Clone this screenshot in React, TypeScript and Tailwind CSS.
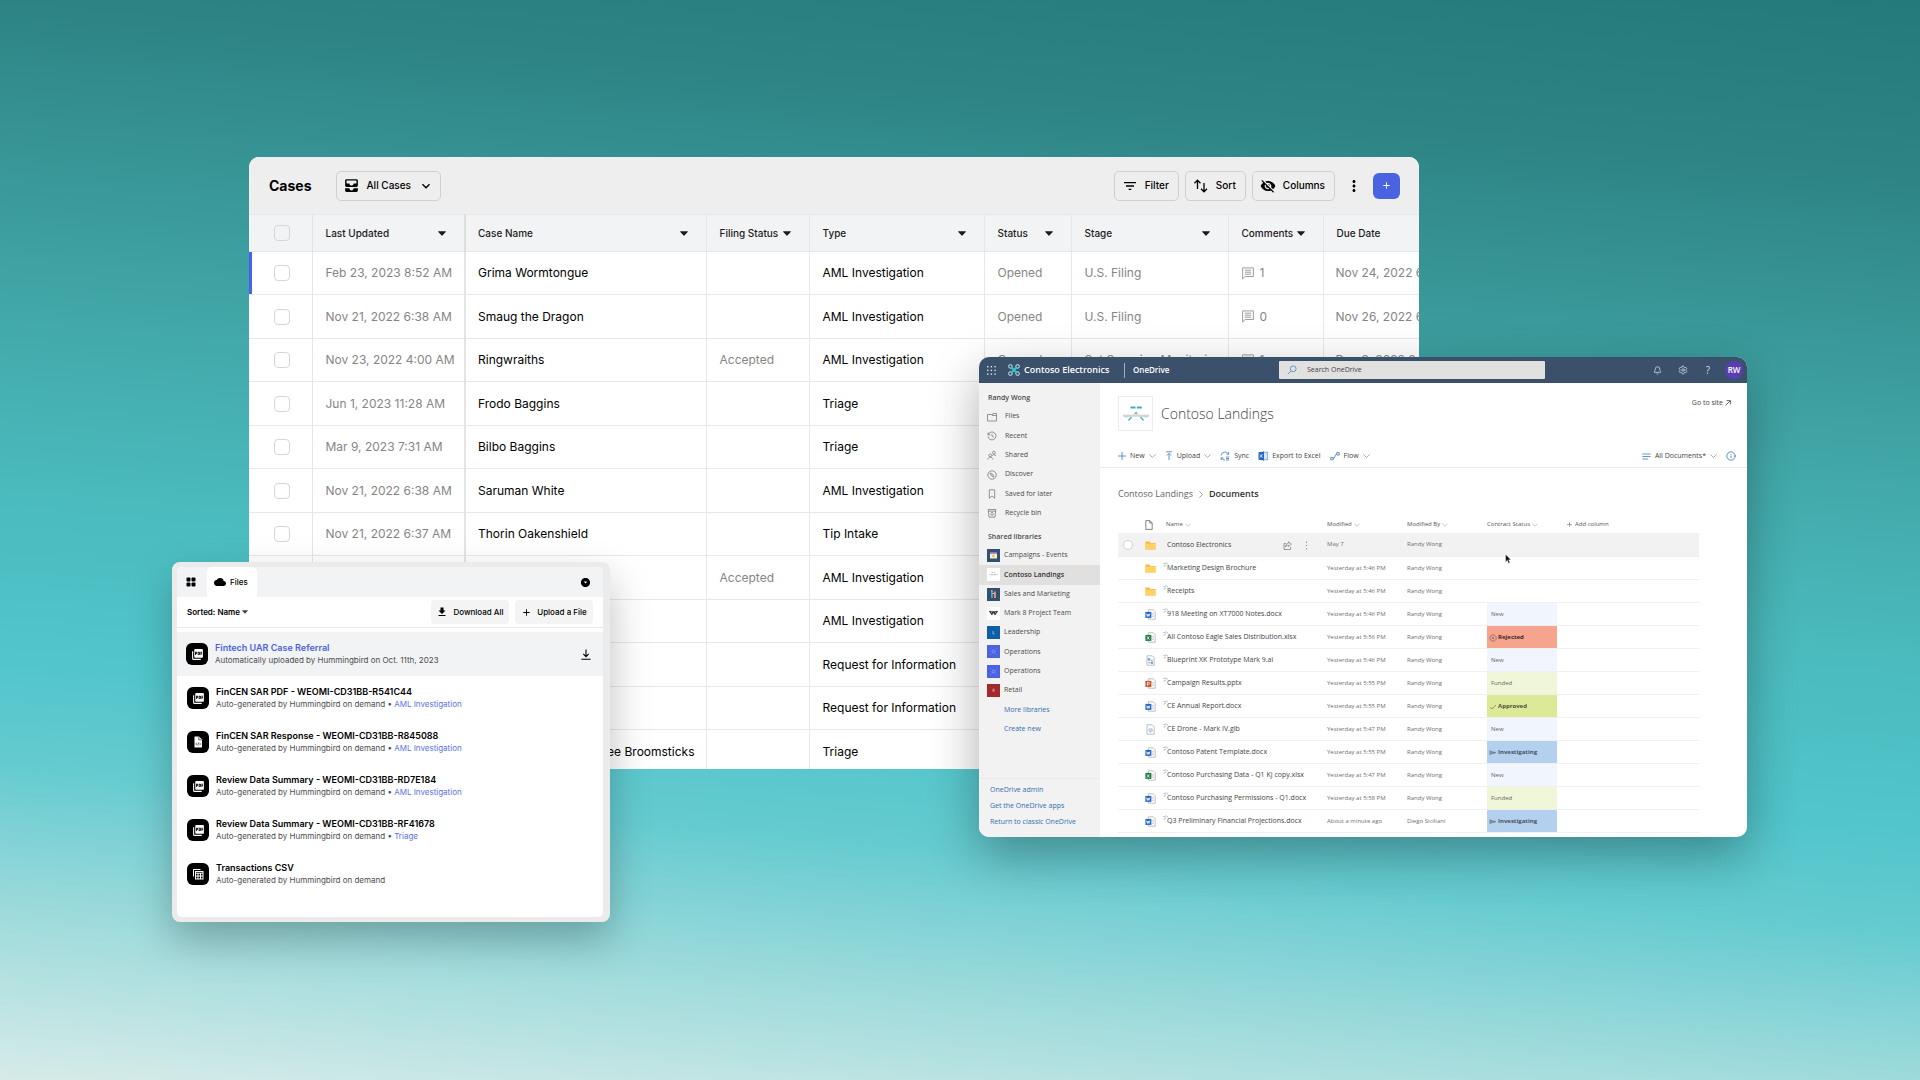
import type { ReactNode } from 'react'
import {
  MdAdd,
  MdAllInbox,
  MdArrowDropDownCircle,
  MdCloud,
  MdDownload,
  MdFilterList,
  MdKeyboardArrowDown,
  MdMoreVert,
  MdPictureAsPdf,
  MdVisibilityOff,
} from 'react-icons/md'
import { Bell, Info, Settings } from 'lucide-react'

interface CaseRow {
  updated: string
  name: string
  filing?: string
  type: string
  status?: string
  stage?: string
  comments?: number
  due?: string
}

const CASES: CaseRow[] = [
  { updated: 'Feb 23, 2023 8:52 AM', name: 'Grima Wormtongue', type: 'AML Investigation', status: 'Opened', stage: 'U.S. Filing', comments: 1, due: 'Nov 24, 2022 6' },
  { updated: 'Nov 21, 2022 6:38 AM', name: 'Smaug the Dragon', type: 'AML Investigation', status: 'Opened', stage: 'U.S. Filing', comments: 0, due: 'Nov 26, 2022 6' },
  { updated: 'Nov 23, 2022 4:00 AM', name: 'Ringwraiths', filing: 'Accepted', type: 'AML Investigation', status: 'Opened', stage: 'Set Sourcing Monitoring', comments: 1, due: 'Dec 3, 2022 3' },
  { updated: 'Jun 1, 2023 11:28 AM', name: 'Frodo Baggins', type: 'Triage' },
  { updated: 'Mar 9, 2023 7:31 AM', name: 'Bilbo Baggins', type: 'Triage' },
  { updated: 'Nov 21, 2022 6:38 AM', name: 'Saruman White', type: 'AML Investigation' },
  { updated: 'Nov 21, 2022 6:37 AM', name: 'Thorin Oakenshield', type: 'Tip Intake' },
  { updated: '', name: '', filing: 'Accepted', type: 'AML Investigation' },
  { updated: '', name: '', type: 'AML Investigation' },
  { updated: '', name: '', type: 'Request for Information' },
  { updated: '', name: '', type: 'Request for Information' },
  { updated: '', name: 'Madame Rosmerta Three Broomsticks', type: 'Triage' },
]

const CASE_COLUMNS = [
  { label: 'Last Updated', width: 'w-[153px]' },
  { label: 'Case Name', width: 'w-[241px]' },
  { label: 'Filing Status', width: 'w-[103px]' },
  { label: 'Type', width: 'w-[175px]' },
  { label: 'Status', width: 'w-[87px]' },
  { label: 'Stage', width: 'w-[157px]' },
  { label: 'Comments', width: 'w-[95px]' },
]

function Caret({ className }: { className?: string }) {
  return (
    <svg viewBox="0 0 8 5" className={className} fill="currentColor" aria-hidden="true">
      <path d="M.6.3h6.8c.4 0 .6.5.3.8L4.4 4.6a.6.6 0 0 1-.8 0L.3 1.1C0 .8.2.3.6.3z" />
    </svg>
  )
}

function SortIcon() {
  return (
    <svg viewBox="0 0 16 16" className="size-4" fill="none" stroke="currentColor" strokeWidth="1.3" aria-hidden="true">
      <path d="M4.5 11V2.2M1.5 5.2l3-3 3 3M11 5v8.800M8 10.800l3 3 3-3" />
    </svg>
  )
}

function CommentIcon() {
  return (
    <svg viewBox="0 0 12 13" className="h-[13px] w-3" fill="none" stroke="currentColor" strokeWidth=".8" aria-hidden="true">
      <path d="M.6.9h10.800v8.600H3.200L.6 12zM2.800 3.200h6.400M2.800 5.200h6.400M2.800 7.200h6.400" />
    </svg>
  )
}

function ToolButton({ icon, children }: { icon: ReactNode; children: ReactNode }) {
  return (
    <button className="flex h-[30px] items-center gap-[7px] rounded-[5px] border border-[#d0d0d0] pr-[9px] pl-[7px] text-[10px] font-medium">
      {icon}
      {children}
    </button>
  )
}

function RowCheckbox({ label }: { label: string }) {
  return (
    <input
      type="checkbox"
      aria-label={label}
      className="ml-[25px] block size-4 appearance-none rounded-[4px] border border-[#d6d6d6] checked:bg-[#4a63e0]"
    />
  )
}

function CasesWindow() {
  return (
    <section className="absolute top-[157px] right-[501px] left-[249px] h-[612px] overflow-hidden rounded-[10px] bg-white font-['Inter',sans-serif] text-black">
      <header className="flex h-[57px] items-center bg-[#eeeeee] pr-[19px] pl-5">
        <h1 className="text-[14px] font-bold">Cases</h1>
        <button className="ml-6 flex h-[30px] items-center gap-[7px] rounded-[5px] border border-[#d0d0d0] px-[6px] text-[10px] font-medium">
          <MdAllInbox className="size-[17px]" />
          All Cases
          <MdKeyboardArrowDown className="size-4" />
        </button>
        <div className="ml-auto flex items-center gap-[6px]">
          <ToolButton icon={<MdFilterList className="size-4" />}>Filter</ToolButton>
          <ToolButton icon={<SortIcon />}>Sort</ToolButton>
          <ToolButton icon={<MdVisibilityOff className="size-4" />}>Columns</ToolButton>
          <button aria-label="More" className="mx-1">
            <MdMoreVert className="size-[18px]" />
          </button>
          <button aria-label="New case" className="flex h-[26px] w-[27px] items-center justify-center rounded-[6px] bg-[#4a63e0] text-white">
            <MdAdd className="size-[11px]" />
          </button>
        </div>
      </header>

      <table className="w-full table-fixed border-collapse text-left text-[12px] whitespace-nowrap">
        <thead>
          <tr className="h-[37px] border-y border-[#e6e7e8] bg-[#f2f3f5] text-[10px] text-[#1c1c1c]">
            <th className="w-[63px] border-r border-[#e2e3e4] p-0">
              <RowCheckbox label="Select all cases" />
            </th>
            {CASE_COLUMNS.map((col, i) => (
              <th
                key={col.label}
                className={`${col.width} p-0 font-medium ${i === 0 ? 'border-r-2 border-[#dcdddc]' : 'border-r border-[#e6e7e8]'}`}
              >
                <div className={`flex items-center justify-between pr-[18px] ${i === 1 ? 'pl-3' : 'pl-[13px]'}`}>
                  {col.label}
                  <Caret className="w-2" />
                </div>
              </th>
            ))}
            <th className="p-0 pl-[13px] font-medium">Due Date</th>
          </tr>
        </thead>
        <tbody>
          {CASES.map((row, i) => (
            <tr key={i} className="border-b border-[#e8e8e8] odd:h-[43px] even:h-[44px]">
              <td className={`border-r border-[#e6e6e6] p-0 ${i === 0 ? 'shadow-[inset_3px_0_0_#4a5ff0]' : ''}`}>
                <RowCheckbox label={`Select ${row.name}`} />
              </td>
              <td className="border-r-2 border-[#e4e4e4] p-0 pl-[13px] text-[#858585]">{row.updated}</td>
              <td className="border-r border-[#e8e8e8] p-0 pl-3">{row.name}</td>
              <td className="border-r border-[#e8e8e8] p-0 pl-[13px] text-[#858585]">{row.filing}</td>
              <td className="border-r border-[#e8e8e8] p-0 pl-[13px]">{row.type}</td>
              <td className="border-r border-[#e8e8e8] p-0 pl-[13px] text-[#858585]">{row.status}</td>
              <td className="border-r border-[#e8e8e8] p-0 pl-[13px] text-[#858585]">{row.stage}</td>
              <td className="border-r border-[#e8e8e8] p-0 pl-[13px] text-[#858585]">
                {row.comments !== undefined && (
                  <span className="flex items-center gap-[6px]">
                    <CommentIcon />
                    {row.comments}
                  </span>
                )}
              </td>
              <td className="p-0 pl-3 text-[#858585]">{row.due}</td>
            </tr>
          ))}
        </tbody>
      </table>
    </section>
  )
}

type FileKind = 'pdf' | 'code' | 'csv'

const FILES: { kind: FileKind; title: string; note: string; link?: string }[] = [
  { kind: 'pdf', title: 'FinCEN SAR PDF - WEOMI-CD31BB-R541C44', note: 'Auto-generated by Hummingbird on demand', link: 'AML Investigation' },
  { kind: 'code', title: 'FinCEN SAR Response - WEOMI-CD31BB-R845088', note: 'Auto-generated by Hummingbird on demand', link: 'AML Investigation' },
  { kind: 'pdf', title: 'Review Data Summary - WEOMI-CD31BB-RD7E184', note: 'Auto-generated by Hummingbird on demand', link: 'AML Investigation' },
  { kind: 'pdf', title: 'Review Data Summary - WEOMI-CD31BB-RF41678', note: 'Auto-generated by Hummingbird on demand', link: 'Triage' },
  { kind: 'csv', title: 'Transactions CSV', note: 'Auto-generated by Hummingbird on demand' },
]

function KindBadge({ kind }: { kind: FileKind }) {
  return (
    <span className="flex size-[22px] shrink-0 items-center justify-center rounded-[6px] bg-black text-white">
      {kind === 'pdf' && <MdPictureAsPdf className="size-[13px]" />}
      {kind === 'code' && (
        <svg viewBox="0 0 12 12" className="size-3" aria-hidden="true">
          <path d="M2.5.5H7L10 3.6v7.9H2.5z" fill="#fff" />
          <path d="M6.8.8v3h3M4.9 6.8 3.8 8l1.1 1.2M7.5 6.8 8.6 8 7.5 9.2M6.6 6.6 5.8 9.4" stroke="#000" strokeWidth=".6" fill="none" />
        </svg>
      )}
      {kind === 'csv' && (
        <svg viewBox="0 0 12 12" className="size-3" fill="none" stroke="#fff" strokeWidth="1" aria-hidden="true">
          <path d="M1.5 8.5v-7h7" />
          <rect x="3.5" y="3.5" width="7.5" height="7.5" />
          <path d="M3.5 5.2H11M3.5 8H11M6 5v6M8.5 5v6" />
        </svg>
      )}
    </span>
  )
}

function FilesWindow() {
  return (
    <section className="absolute top-[562px] left-[172px] w-[438px] rounded-[8px] bg-[#ebebec] py-[5px] pr-[7px] pl-[5px] font-['Inter',sans-serif] text-black shadow-[0_18px_40px_rgba(0,0,0,0.25)]">
      <div className="overflow-hidden rounded-[5px] bg-white pb-[21px]">
        <div className="flex h-[30px] items-center bg-[#f2f3f5]">
          <button aria-label="Dashboard" className="flex w-[30px] items-center pl-[9px]">
            <svg viewBox="0 0 10 10" className="size-[10px]" aria-hidden="true">
              <rect x=".5" y=".5" width="4" height="4" rx="1" />
              <rect x="5.5" y=".5" width="4" height="4" rx="1" />
              <rect x=".5" y="5.5" width="4" height="4" rx="1" />
              <rect x="5.5" y="5.5" width="4" height="4" rx="1" />
            </svg>
          </button>
          <button className="flex h-full w-[50px] items-center gap-1 rounded-t-[5px] bg-white pl-[7px] text-[8px] font-medium">
            <MdCloud className="size-3" />
            Files
          </button>
          <button aria-label="Collapse" className="mr-3 ml-auto">
            <MdArrowDropDownCircle className="size-[11px]" />
          </button>
        </div>

        <div className="flex h-[31px] items-center border-b border-[#e6e7e8] px-[10px] text-[8px]">
          <button className="flex items-center gap-[2px] font-semibold">
            Sorted: Name
            <Caret className="w-[6px] text-[#444]" />
          </button>
          <button className="ml-auto flex h-6 w-[78px] items-center justify-center gap-[5px] rounded-[4px] bg-[#f4f4f5] font-medium">
            <MdDownload className="size-3" />
            Download All
          </button>
          <button className="ml-[6px] flex h-6 w-[78px] items-center justify-center gap-[5px] rounded-[4px] bg-[#f4f4f5] font-medium">
            <MdAdd className="size-[11px]" />
            Upload a File
          </button>
        </div>

        <ul className="mt-1">
          <li className="flex h-11 items-center gap-[7px] bg-[#f2f3f5] pr-3 pl-[9px]">
            <KindBadge kind="pdf" />
            <div>
              <a href="#" className="block text-[9px] leading-[13px] font-semibold text-[#4a63e0]">Fintech UAR Case Referral</a>
              <p className="text-[8px] leading-[13px] text-[#4c4c4c]">Automatically uploaded by Hummingbird on Oct. 11th, 2023</p>
            </div>
            <button aria-label="Download Fintech UAR Case Referral" className="ml-auto">
              <svg viewBox="0 0 10 11" className="h-[11px] w-[10px]" fill="none" stroke="#000" strokeWidth="1.1" aria-hidden="true">
                <path d="M5 .5v7M2.3 4.9 5 7.6l2.7-2.7M.4 10.2h9.2" />
              </svg>
            </button>
          </li>
          {FILES.map(file => (
            <li key={file.title} className="flex h-11 items-center gap-[7px] pl-[10px]">
              <KindBadge kind={file.kind} />
              <div>
                <p className="text-[9px] leading-[13px] font-semibold">{file.title}</p>
                <p className="text-[8px] leading-[13px] text-[#4c4c4c]">
                  {file.note}
                  {file.link && (
                    <>
                      {' • '}
                      <a href="#" className="text-[#5b72e6]">{file.link}</a>
                    </>
                  )}
                </p>
              </div>
            </li>
          ))}
        </ul>
      </div>
    </section>
  )
}

const NAV_ITEMS: { label: string; icon: ReactNode }[] = [
  { label: 'Files', icon: <path d="M.5 2.5h4l1 1h4v5.5h-9zM5 3.5l1-2h3.5v2" /> },
  { label: 'Recent', icon: <path d="M1 1.5v2.3h2.3M1.2 3.6A4 4 0 1 1 1 5.4M5 2.8v2.5l1.8 1" /> },
  { label: 'Shared', icon: <path d="M6.8 1.2a1.4 1.4 0 1 0 .1 0zM5.4 5.6c.3-1.2 2.7-1.5 3.6.4M3.3 4a1.4 1.4 0 1 0 .1 0zM.8 9.4c.2-3 4.8-3 5 0" /> },
  { label: 'Discover', icon: <path d="M5 .8a4.2 4.2 0 1 0 .1 0zM3 3l2.8 1.3L7 7 4.3 5.7z" /> },
  { label: 'Saved for later', icon: <path d="M2.3.8h5.4v8.4L5 7 2.3 9.2z" /> },
  { label: 'Recycle bin', icon: <path d="M1.2 1.5h7.6L8 9.2H2zM1.4 3.2h7.2M3.8 5.2 5 4.2l1.2 1M3.8 5.4l.5 1.8h1.6l.4-1.8" /> },
]

const LIBRARIES: { label: string; tile: string; art: ReactNode }[] = [
  {
    label: 'Campaigns - Events',
    tile: 'bg-[#34506f]',
    art: (
      <>
        <path d="M3 3.5h7v6H3z" fill="#f5efe6" />
        <path d="M3 3h7v1.8H3z" fill="#9a6fc8" />
        <circle cx="6.5" cy="7" r="1.4" fill="#f2c14e" />
      </>
    ),
  },
  {
    label: 'Contoso Landings',
    tile: 'bg-white',
    art: (
      <>
        <path d="M4.5 4.5h1.6M6.9 4.5h1.6" stroke="#9bc9d0" strokeWidth=".8" />
        <path d="M2 6.5h9M4.5 8.2l1-1.2M8.5 8.2l-1-1.2" stroke="#c4c8cc" strokeWidth=".8" />
      </>
    ),
  },
  {
    label: 'Sales and Marketing',
    tile: 'bg-[#34506f]',
    art: (
      <>
        <path d="M4 4h1.8v6H4z" fill="#49a9c4" />
        <path d="M7 3.4h2V10H7z" fill="#e58a72" />
        <circle cx="4.9" cy="3" r=".9" fill="#e8b79d" />
        <path d="M5.6 5.5h1.6" stroke="#fff" strokeWidth=".8" />
      </>
    ),
  },
  {
    label: 'Mark 8 Project Team',
    tile: 'bg-white',
    art: <path d="M2 4.8h9M3 4l1.6 3.4M6 4.6 4.8 8M7 4.6 8.2 8M10 4 8.4 7.4M5 6h3" stroke="#333" strokeWidth="1.1" />,
  },
  { label: 'Leadership', tile: 'bg-[#0f5fa6]', art: <path d="M6 5v3h1.5" stroke="#9fc4e8" strokeWidth=".8" /> },
  {
    label: 'Operations',
    tile: 'bg-[#4a63e0]',
    art: <path d="M6.5 5a1.5 1.5 0 1 0 .1 0zM3.5 3.5l.7.7M9.5 3.5l-.7.7M3.5 9.5l.7-.7M9.5 9.5l-.7-.7" stroke="#9fb0ff" strokeWidth=".7" />,
  },
  {
    label: 'Operations',
    tile: 'bg-[#4a63e0]',
    art: <path d="M6.5 5a1.5 1.5 0 1 0 .1 0zM3.5 3.5l.7.7M9.5 3.5l-.7.7M3.5 9.5l.7-.7M9.5 9.5l-.7-.7" stroke="#9fb0ff" strokeWidth=".7" />,
  },
  { label: 'Retail', tile: 'bg-[#a32a2a]', art: <path d="M6 8V5h1.2v1.3H6.2M6.6 6.5 7.4 8" stroke="#e8a5a5" strokeWidth=".7" /> },
]

type DocKind = 'folder' | 'word' | 'excel' | 'ppt' | 'ai' | 'glb'
type Status = 'New' | 'Rejected' | 'Funded' | 'Approved' | 'Investigating'

const DOCS: { kind: DocKind; name: string; modified: string; by: string; status?: Status }[] = [
  { kind: 'folder', name: 'Contoso Electronics', modified: 'May 7', by: 'Randy Wong' },
  { kind: 'folder', name: 'Marketing Design Brochure', modified: 'Yesterday at 5:46 PM', by: 'Randy Wong' },
  { kind: 'folder', name: 'Receipts', modified: 'Yesterday at 5:46 PM', by: 'Randy Wong' },
  { kind: 'word', name: '918 Meeting on XT7000 Notes.docx', modified: 'Yesterday at 5:46 PM', by: 'Randy Wong', status: 'New' },
  { kind: 'excel', name: 'All Contoso Eagle Sales Distribution.xlsx', modified: 'Yesterday at 5:56 PM', by: 'Randy Wong', status: 'Rejected' },
  { kind: 'ai', name: 'Blueprint XK Prototype Mark 9.ai', modified: 'Yesterday at 5:46 PM', by: 'Randy Wong', status: 'New' },
  { kind: 'ppt', name: 'Campaign Results.pptx', modified: 'Yesterday at 5:55 PM', by: 'Randy Wong', status: 'Funded' },
  { kind: 'word', name: 'CE Annual Report.docx', modified: 'Yesterday at 5:55 PM', by: 'Randy Wong', status: 'Approved' },
  { kind: 'glb', name: 'CE Drone - Mark IV.glb', modified: 'Yesterday at 5:47 PM', by: 'Randy Wong', status: 'New' },
  { kind: 'word', name: 'Contoso Patent Template.docx', modified: 'Yesterday at 5:55 PM', by: 'Randy Wong', status: 'Investigating' },
  { kind: 'excel', name: 'Contoso Purchasing Data - Q1 KJ copy.xlsx', modified: 'Yesterday at 5:47 PM', by: 'Randy Wong', status: 'New' },
  { kind: 'word', name: 'Contoso Purchasing Permissions - Q1.docx', modified: 'Yesterday at 5:58 PM', by: 'Randy Wong', status: 'Funded' },
  { kind: 'word', name: 'Q3 Preliminary Financial Projections.docx', modified: 'About a minute ago', by: 'Diego Siciliani', status: 'Investigating' },
]

const STATUS_STYLE: Record<Status, string> = {
  New: 'bg-[#f0f5fe] pl-[4px] text-[#666]',
  Funded: 'bg-[#f0f7d8] pl-[4px] text-[#666]',
  Rejected: 'bg-[#f7a48e] pl-[2px] font-bold text-[#3a2a28]',
  Approved: 'bg-[#dcea98] pl-[2px] font-bold text-[#4c5238]',
  Investigating: 'bg-[#b4d0ef] pl-[2px] font-bold text-[#46525f]',
}

const APP_COLOR = { word: '#2468c0', excel: '#1f7a45', ppt: '#c94f2a' }
const APP_MARK = {
  word: 'M1.6 4.6l.8 2.8.8-2.4.8 2.4.8-2.8',
  excel: 'M2 4.4l2.4 3.2M4.4 4.4 2 7.6',
  ppt: 'M2.4 7.8V4.4h1.3a.9.9 0 0 1 0 1.9H2.4',
}

function DocIcon({ kind }: { kind: DocKind }) {
  if (kind === 'folder') {
    return (
      <svg viewBox="0 0 11 9" className="h-[9px] w-[11px]" aria-hidden="true">
        <path d="M.5.6h3.8l1 1.4h5.2v6.4H.5z" fill="#f6b73c" />
        <path d="M.5 2.6h10v5.8H.5z" fill="#fdd267" />
      </svg>
    )
  }
  if (kind === 'ai' || kind === 'glb') {
    return (
      <svg viewBox="0 0 11 11" className="size-[11px]" fill="none" aria-hidden="true">
        <path d="M2 .8h5.2l2 2v7.4H2z" fill="#fff" stroke="#a5a5a5" strokeWidth=".7" />
        {kind === 'ai' ? (
          <path d="M3.2 3.6h1.6v1.6H3.2zM6 5.2h1.8M3.4 7.8h1.8M6.2 7h1.4v1.4H6.2z" stroke="#3f86d0" strokeWidth=".8" />
        ) : (
          <path d="m5.6 4.4 1.7.9v1.9l-1.7.9-1.7-.9V5.3zM3.9 5.3l1.7.9 1.7-.9M5.6 6.2v1.9" stroke="#7fa3dc" strokeWidth=".6" />
        )}
      </svg>
    )
  }
  return (
    <svg viewBox="0 0 11 11" className="size-[11px]" fill="none" aria-hidden="true">
      <path d="M3.4.8h4.8l2 2v7.4H3.4z" fill="#fff" stroke="#a5a5a5" strokeWidth=".7" />
      <path d="M7 4.4h2M7 6h2M7 7.6h2" stroke="#b5b5b5" strokeWidth=".6" />
      <path d="M.4 2.9h6v6h-6z" fill={APP_COLOR[kind]} />
      <path d={APP_MARK[kind]} stroke="#fff" strokeWidth=".8" />
    </svg>
  )
}

function StatusIcon({ status }: { status: Status }) {
  const shapes: Partial<Record<Status, string>> = {
    Rejected: 'M4 .8a3.2 3.2 0 1 0 .1 0zM2.8 2.8l2.4 2.4M5.2 2.8 2.8 5.2',
    Approved: 'M1 4.2 3 6l4-4',
    Investigating: 'M1 1.4V6M1 2.2l5.8 1.5L1 5.2M1 3.7h4',
  }
  if (!shapes[status]) return null
  return (
    <svg viewBox="0 0 8 8" className="size-[8px] shrink-0" fill="none" stroke="#5a5a5a" strokeWidth=".6" aria-hidden="true">
      <path d={shapes[status]} />
    </svg>
  )
}

function Landing({ className }: { className: string }) {
  return (
    <svg viewBox="0 0 28 18" className={className} fill="none" aria-hidden="true">
      <path d="M8.5 2.5h5M14.8 2.5h5" stroke="#35b3bd" strokeWidth="1.8" />
      <path d="M.8 9.8h26.4v1.8l-3 1.2-4-1H8l-4 1-3-1.200z" fill="#d2d3d6" />
      <path d="M10.5 10.2 12.500 7h3l2 3.200z" fill="#e2e3e5" />
      <circle cx="14" cy="8.2" r=".9" fill="#8c8c8c" />
      <path d="M9.5 12 6.5 15.500M18.500 12l3 3.500" stroke="#35b3bd" strokeWidth="1.2" />
    </svg>
  )
}

// Thin chevron used by the drive menus and column headers
function Chevron({ className }: { className: string }) {
  return (
    <svg viewBox="0 0 7 4" className={className} fill="none" stroke="currentColor" strokeWidth=".7" aria-hidden="true">
      <path d="m.4.4 3.1 3.1L6.600.4" />
    </svg>
  )
}

function ThinPlus({ className }: { className: string }) {
  return (
    <svg viewBox="0 0 8 8" className={className} fill="none" stroke="currentColor" strokeWidth=".8" aria-hidden="true">
      <path d="M4 0v8M0 4h8" />
    </svg>
  )
}

function DriveAction({ icon, label, menu }: { icon: ReactNode; label: string; menu?: boolean }) {
  return (
    <button className="flex items-center gap-1">
      {icon}
      {label}
      {menu && <Chevron className="h-1 w-[7px] text-[#8a8a8a]" />}
    </button>
  )
}

function DriveHeader() {
  return (
    <header className="flex h-[26px] items-center bg-[#3a506b] pr-1 pl-2 text-white">
      <button aria-label="App launcher">
        <svg viewBox="0 0 9 9" className="size-[9px]" fill="#dfe6ee" aria-hidden="true">
          {[0, 3.7, 7.4].map(y => [0, 3.7, 7.4].map(x => <rect key={`${x}-${y}`} x={x} y={y} width="1.4" height="1.4" />))}
        </svg>
      </button>
      <svg viewBox="0 0 12 12" className="ml-3 size-3" fill="none" aria-hidden="true">
        <g stroke="#dce9f2" strokeWidth="1">
          <circle cx="2.4" cy="2.4" r="1.8" />
          <circle cx="9.6" cy="2.4" r="1.8" />
          <circle cx="2.4" cy="9.6" r="1.8" />
          <circle cx="9.6" cy="9.6" r="1.8" />
        </g>
        <path d="m3 3 6 6M9 3 3 9" stroke="#35c4cf" strokeWidth="2" />
      </svg>
      <span className="ml-1 w-[100px] text-[9px] font-semibold">Contoso Electronics</span>
      <span className="h-[15px] w-px bg-[#9fb0c2]" />
      <span className="ml-2 text-[8px] font-semibold">OneDrive</span>
      <label className="absolute top-[4px] right-[202px] left-[300px] flex h-[18px] items-center gap-[10px] rounded-[1px] bg-[#e1e1e0] pl-2">
        <svg viewBox="0 0 10 10" className="size-[10px] shrink-0" fill="none" stroke="#5b8fc7" strokeWidth=".9" aria-hidden="true">
          <circle cx="6.2" cy="3.8" r="2.9" />
          <path d="M4 6 .8 9.2" />
        </svg>
        <input
          type="search"
          aria-label="Search OneDrive"
          placeholder="Search OneDrive"
          className="w-full bg-transparent pt-px text-[7px] outline-none placeholder:text-[#444]"
        />
      </label>
      <div className="ml-auto flex items-center text-[#d5dde6]">
        <button aria-label="Notifications" className="w-[26px]">
          <Bell className="mx-auto size-[9px]" strokeWidth={2} />
        </button>
        <button aria-label="Settings" className="w-[25px]">
          <Settings className="mx-auto size-[10px]" strokeWidth={1.8} />
        </button>
        <button aria-label="Help" className="w-[26px] text-[10px]">?</button>
        <span className="ml-1 flex size-[18px] items-center justify-center rounded-full bg-[#5b3db3] text-[8px] font-semibold text-white">RW</span>
      </div>
    </header>
  )
}

function DriveSidebar() {
  return (
    <aside className="flex w-[121px] shrink-0 flex-col bg-[#f3f2f2] pt-[9px] text-[7px] text-[#4a4a4a]">
      <h2 className="pl-[9px] text-[7px] leading-[12px] font-semibold">Randy Wong</h2>
      <ul className="mt-[3px] grid h-[116px] auto-rows-fr">
        {NAV_ITEMS.map(item => (
          <li key={item.label}>
            <a href="#" className="flex h-full items-center gap-2 pl-2">
              <svg viewBox="0 0 10 10" className="size-[10px]" fill="none" stroke="#6a6a6a" strokeWidth=".7" aria-hidden="true">
                {item.icon}
              </svg>
              {item.label}
            </a>
          </li>
        ))}
      </ul>
      <h2 className="mt-2 pl-[9px] text-[7px] leading-[12px] font-semibold">Shared libraries</h2>
      <ul className="mt-[3px] grid h-[154px] auto-rows-fr">
        {LIBRARIES.map((lib, i) => (
          <li key={i} className={i === 1 ? 'bg-[#e1e0df] font-semibold text-[#333]' : ''}>
            <a href="#" className="flex h-full items-center gap-1 pl-2">
              <svg viewBox="0 0 13 13" className={`size-[13px] ${lib.tile}`} fill="none" aria-hidden="true">
                {lib.art}
              </svg>
              {lib.label}
            </a>
          </li>
        ))}
      </ul>
      <a href="#" className="flex h-5 items-center pl-[25px] text-[#2f6fb0]">More libraries</a>
      <a href="#" className="flex h-[19px] items-center pl-[25px] text-[#2f6fb0]">Create new</a>
      <div className="mt-auto mb-[6px] border-t border-[#eaeaea] pt-1 text-[#2f6fb0]">
        <a href="#" className="flex h-4 items-center pl-[11px]">OneDrive admin</a>
        <a href="#" className="flex h-4 items-center pl-[11px]">Get the OneDrive apps</a>
        <a href="#" className="flex h-4 items-center pl-[11px]">Return to classic OneDrive</a>
      </div>
    </aside>
  )
}

function SharedMark() {
  return (
    <svg viewBox="0 0 5 5" className="size-[5px]" fill="none" stroke="#5b8fd0" strokeWidth=".6" aria-hidden="true">
      <path d="M.4 1.5h1.5M3 .3v1.800M4.700 1.200v1.200M.6 4.400 3 2.900" />
    </svg>
  )
}

function HeadLabel({ children }: { children: ReactNode }) {
  return (
    <button className="flex items-center gap-[2px]">
      {children}
      <Chevron className="h-1 w-[6px] text-[#a0a0a0]" />
    </button>
  )
}

function DocTable() {
  return (
    <table className="w-full table-fixed border-collapse text-left whitespace-nowrap">
      <thead>
        <tr className="h-[17px] text-[6px] text-[#555]">
          <th className="w-[20px] p-0" />
          <th className="w-[28px] p-0 pl-[7px]">
            <svg viewBox="0 0 8 10" className="h-[10px] w-2" fill="none" stroke="#666" strokeWidth=".8" aria-label="File type">
              <path d="M.8.6h4l2.4 2.4v6.400H.8zM4.800.6V3h2.400" />
            </svg>
          </th>
          <th className="w-[161px] p-0 font-normal"><HeadLabel>Name</HeadLabel></th>
          <th className="w-[80px] p-0 font-normal"><HeadLabel>Modified</HeadLabel></th>
          <th className="w-[80px] p-0 font-normal"><HeadLabel>Modified By</HeadLabel></th>
          <th className="w-[70px] p-0 font-normal"><HeadLabel>Contract Status</HeadLabel></th>
          <th className="p-0 pl-[10px] font-normal">
            <button className="flex items-center gap-[3px]">
              <ThinPlus className="size-[5px]" />
              Add column
            </button>
          </th>
        </tr>
      </thead>
      <tbody>
        {DOCS.map((doc, i) => (
          <tr key={doc.name} className={`h-[23px] border-b border-[#f0f0f0] text-[6px] text-[#707070] ${i === 0 ? 'bg-[#f3f2f2]' : ''}`}>
            <td className="p-0 pt-[2px]">
              {i === 0 && (
                <input
                  type="radio"
                  aria-label={`Select ${doc.name}`}
                  className="ml-[5px] block size-[10px] appearance-none rounded-full border border-[#d0d0d0] bg-white"
                />
              )}
            </td>
            <td className="p-0 pt-[2px] pl-[7px]">
              <DocIcon kind={doc.kind} />
            </td>
            <td className="p-0 pt-[2px] text-[7px] text-[#444]">
              {i === 0 ? (
                <div className="flex items-center pl-px">
                  {doc.name}
                  <svg viewBox="0 0 9 9" className="ml-auto size-[9px]" fill="none" stroke="#777" strokeWidth=".7" aria-label="Share">
                    <path d="M3 2.5H1v6h6.500V6M5.500.8 8.400 3.200 5.500 5.500V4.200C4 4.200 3 4.800 2.500 6c0-2.300 1.200-3.700 3-3.900z" />
                  </svg>
                  <svg viewBox="0 0 3 9" className="mr-[19px] ml-[13px] h-[9px] w-[3px]" fill="#777" aria-label="More actions">
                    <circle cx="1.5" cy="1.2" r=".6" />
                    <circle cx="1.5" cy="4.5" r=".6" />
                    <circle cx="1.5" cy="7.8" r=".6" />
                  </svg>
                </div>
              ) : (
                <div className="relative flex items-center pl-px">
                  <span className="absolute -top-px -left-[3px]"><SharedMark /></span>
                  {doc.name}
                </div>
              )}
            </td>
            <td className="p-0 pt-px">{doc.modified}</td>
            <td className="p-0 pt-px">{doc.by}</td>
            <td className="p-0">
              {doc.status && (
                <div className={`flex h-[22px] items-center gap-px pt-[2px] ${STATUS_STYLE[doc.status]}`}>
                  <StatusIcon status={doc.status} />
                  {doc.status}
                </div>
              )}
            </td>
            <td className="p-0" />
          </tr>
        ))}
      </tbody>
    </table>
  )
}

function DriveMain() {
  return (
    <main className="min-w-0 flex-1 pb-1 text-[#444]">
      <div className="flex items-start pt-[13px] pr-4 pl-[18px]">
        <div className="flex size-[35px] items-center justify-center border border-[#ececec]">
          <Landing className="h-[18px] w-7" />
        </div>
        <h1 className="ml-2 text-[14px] leading-[35px] font-light text-[#444]">Contoso Landings</h1>
        <a href="#" className="ml-auto flex items-center gap-[2px] pt-[2px] text-[7px]">
          Go to site
          <svg viewBox="0 0 6 6" className="size-[6px]" fill="none" stroke="#444" strokeWidth=".8" aria-hidden="true">
            <path d="M.5 5.5 5.200.8M1.500.6h3.900v3.900" />
          </svg>
        </a>
      </div>

      <div className="mt-[14px] flex h-[23px] items-center gap-[9px] border-b border-[#ececec] pr-[11px] pl-[18px] text-[7px]">
        <DriveAction menu label="New" icon={<ThinPlus className="size-2 text-[#3a78bd]" />} />
        <DriveAction
          menu
          label="Upload"
          icon={
            <svg viewBox="0 0 8 10" className="h-[10px] w-2" fill="none" stroke="#3a78bd" strokeWidth=".8" aria-hidden="true">
              <path d="M1 .8h6M4 9.2V2.600M1.800 4.600 4 2.400l2.200 2.200" />
            </svg>
          }
        />
        <DriveAction
          label="Sync"
          icon={
            <svg viewBox="0 0 10 10" className="size-[10px]" fill="none" stroke="#3a78bd" strokeWidth=".8" aria-hidden="true">
              <path d="M1 4.5a4 4 0 0 1 7.400-1.500M8.600 1v2.200H6.400M1.200 9V6.800h2.200M1.500 7A4 4 0 0 0 5 9M6 6h3M6 7.500h3M6 9h3" />
            </svg>
          }
        />
        <DriveAction
          label="Export to Excel"
          icon={
            <svg viewBox="0 0 10 10" className="size-[10px]" aria-hidden="true">
              <path d="M5 1.2h4.500v7.600H5z" fill="#dbe7f5" stroke="#2468c0" strokeWidth=".5" />
              <path d="M.5 1.2 6 .4v9.200L.5 8.800z" fill="#2468c0" />
              <path d="m1.9 3.4 2.600 3.200M4.500 3.400 1.900 6.600" stroke="#fff" strokeWidth=".8" />
            </svg>
          }
        />
        <DriveAction
          menu
          label="Flow"
          icon={
            <svg viewBox="0 0 10 10" className="size-[10px]" fill="none" stroke="#3a78bd" strokeWidth=".8" aria-hidden="true">
              <path d="M.8 6.4h2.400v2.400H.8zM6.800 1.600h2.400V4H6.800zM3.200 7.600C5.400 7.600 4.600 2.800 6.800 2.800" />
            </svg>
          }
        />
        <button className="ml-auto flex items-center gap-1">
          <svg viewBox="0 0 9 7" className="h-[7px] w-[9px]" stroke="#3a78bd" strokeWidth=".8" aria-hidden="true">
            <path d="M.4 1h8.200M.4 3.500h8.200M.4 6h5.600" />
          </svg>
          All Documents*
          <Chevron className="h-1 w-[7px] text-[#8a8a8a]" />
        </button>
        <button aria-label="Details">
          <Info className="size-[10px] text-[#3a78bd]" strokeWidth={2} />
        </button>
      </div>

      <nav aria-label="Breadcrumb" className="mt-[19px] flex items-center gap-[6px] pl-[18px] text-[9px] leading-[14px]">
        <a href="#" className="text-[#666]">Contoso Landings</a>
        <svg viewBox="0 0 4 7" className="h-[7px] w-1" fill="none" stroke="#888" strokeWidth=".8" aria-hidden="true">
          <path d="m.4.4 3.1 3.1L.4 6.600" />
        </svg>
        <span className="font-semibold text-[#333]">Documents</span>
      </nav>

      <div className="mt-[15px] pr-[48px] pl-[18px]">
        <DocTable />
      </div>
    </main>
  )
}

function DriveWindow() {
  return (
    <section className="absolute top-[357px] right-[173px] left-[979px] overflow-hidden rounded-[10px] bg-white font-['Open_Sans','Noto_Sans',sans-serif] shadow-[0_18px_50px_rgba(0,0,0,0.32)]">
      <DriveHeader />
      <div className="flex">
        <DriveSidebar />
        <DriveMain />
      </div>
    </section>
  )
}

export default function App() {
  return (
    <div className="relative min-h-screen overflow-hidden bg-[linear-gradient(185deg,#247a7b_0%,#2d8283_13%,#389697_26%,#42a7a8_38%,#4ababd_52%,#50c5cb_66%,#66cbd0_75%,#a0dbdc_87%,#d6ebe8_100%)]">
      <CasesWindow />
      <FilesWindow />
      <DriveWindow />
      <svg viewBox="0 0 8 12" className="absolute top-[554px] left-[1505px] h-[10px] w-[7px]" aria-hidden="true">
        <path d="M.5.5v9l2.100-2 1.500 3.600 1.600-.7-1.500-3.400H7z" fill="#111" stroke="#fff" strokeWidth=".4" />
      </svg>
    </div>
  )
}
